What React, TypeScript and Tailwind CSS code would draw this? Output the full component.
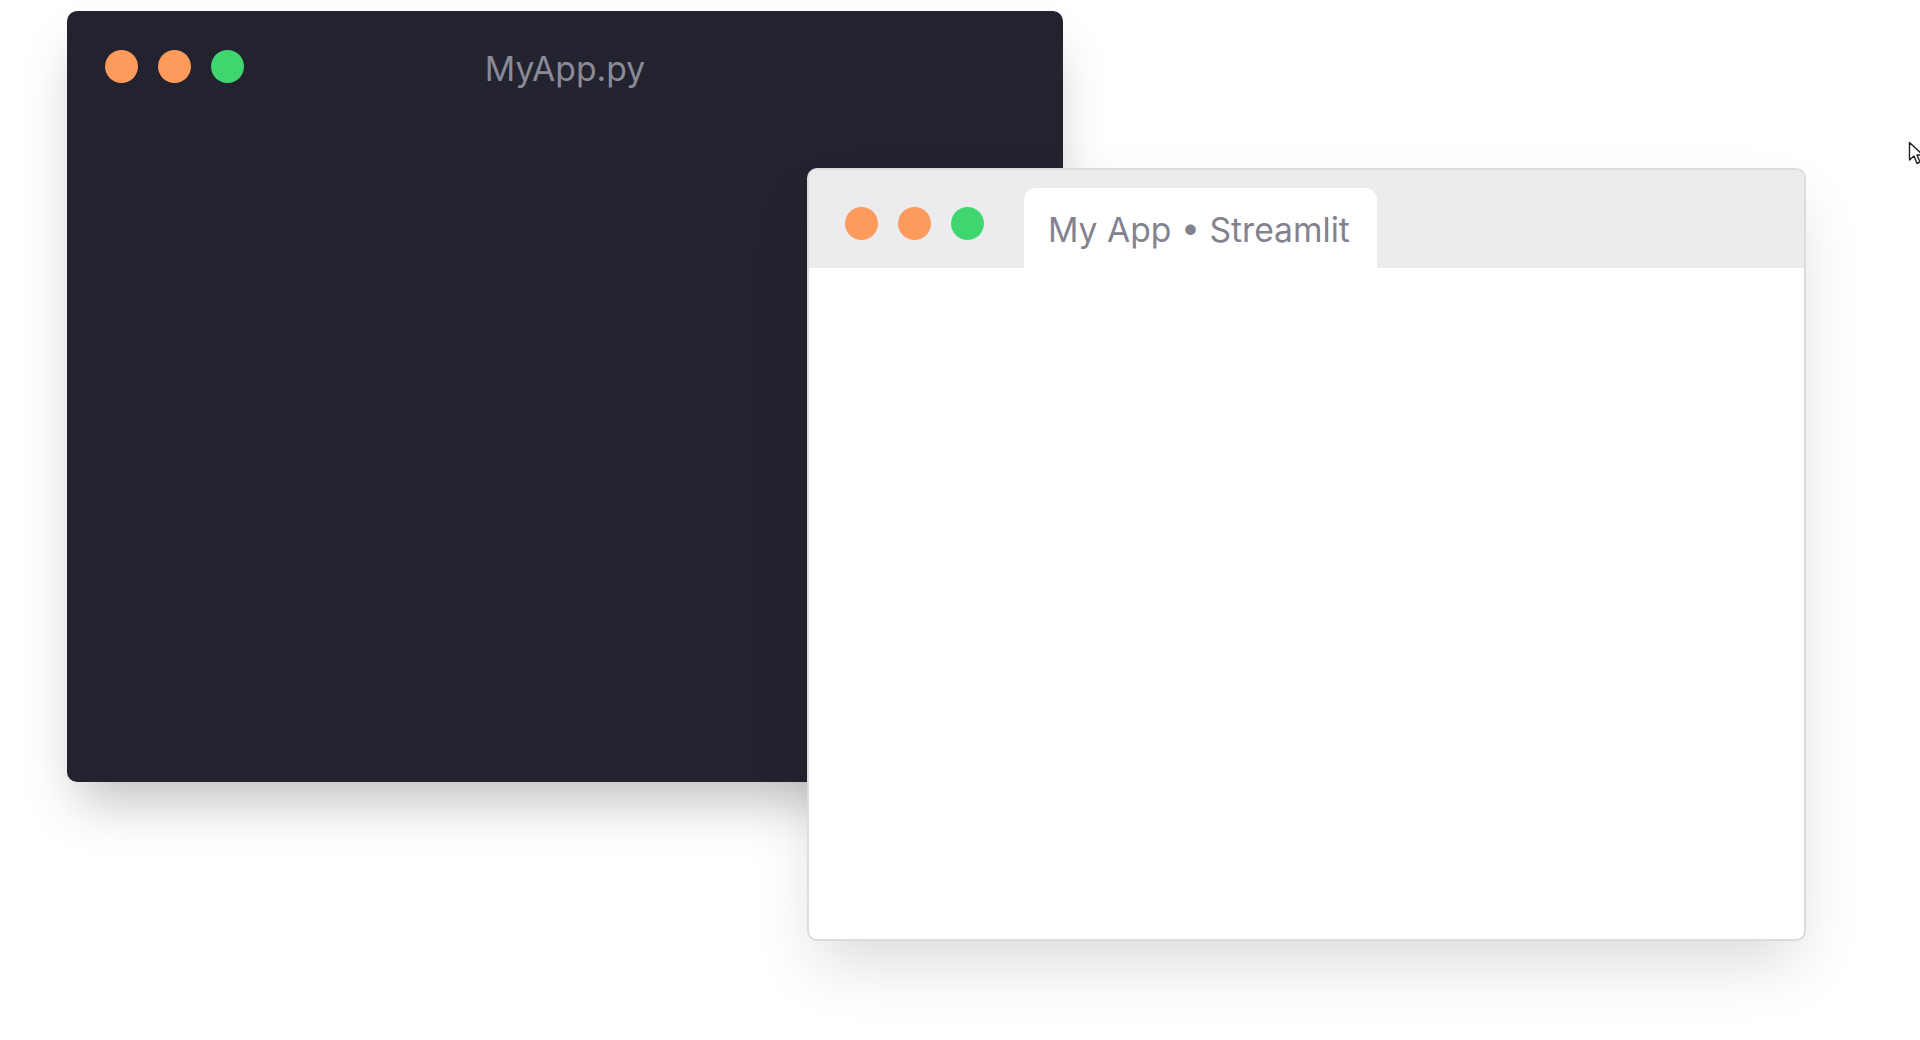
import React from "react";

const Dot = ({ color }: { color: string }) => (
  <div className={`w-[33px] h-[33px] rounded-full ${color}`} />
);

export default function App() {
  return (
    <div
      className="relative w-[1920px] h-[1040px] overflow-hidden bg-white"
      style={{ fontFamily: "Inter, 'Noto Sans', sans-serif" }}
    >
      {/* Dark editor window */}
      <div className="absolute left-[67px] top-[11px] w-[996px] h-[771px] rounded-[10px] bg-[#22232f] shadow-[0_30px_50px_-12px_rgba(0,0,0,0.26)]">
        <div className="grid grid-cols-[1fr_auto_1fr] items-start">
          <div className="flex gap-[20px] pl-[38px] pt-[39px]">
            <Dot color="bg-[#fe9a5c]" />
            <Dot color="bg-[#fe9a5c]" />
            <Dot color="bg-[#40d66f]" />
          </div>
          <div className="pt-[41px] text-[33.7px] leading-none text-[#8a8a96]">MyApp.py</div>
          <div />
        </div>
      </div>

      {/* Browser window */}
      <div className="absolute left-[807px] top-[168px] w-[999px] h-[773px] rounded-[10px] border-2 border-[#dcdcdf] bg-white overflow-hidden shadow-[0_30px_60px_-10px_rgba(0,0,0,0.15)]">
        <div className="flex h-[98px] bg-[#ececef] pl-[36px]">
          <div className="flex gap-[20px] self-start pt-[37px]">
            <Dot color="bg-[#fe9a5c]" />
            <Dot color="bg-[#fe9a5c]" />
            <Dot color="bg-[#40d66f]" />
          </div>
          <div className="ml-[40px] self-end h-[80px] w-[353px] rounded-t-[12px] bg-white pl-[24px] pt-[25px] text-[33.7px] leading-none text-[#83838f] whitespace-nowrap">
            My App • Streamlit
          </div>
        </div>
      </div>

      {/* Cursor */}
      <svg
        className="absolute left-[1908px] top-[141px]"
        width="16"
        height="26"
        viewBox="0 0 16 26"
      >
        <path
          d="M1.5 1.5 L1.5 19 L6 15 L9 22.5 L12 21 L9 14 L15 14 Z"
          fill="white"
          stroke="#1f1f1f"
          strokeWidth="1.4"
          strokeLinejoin="round"
        />
      </svg>
    </div>
  );
}
